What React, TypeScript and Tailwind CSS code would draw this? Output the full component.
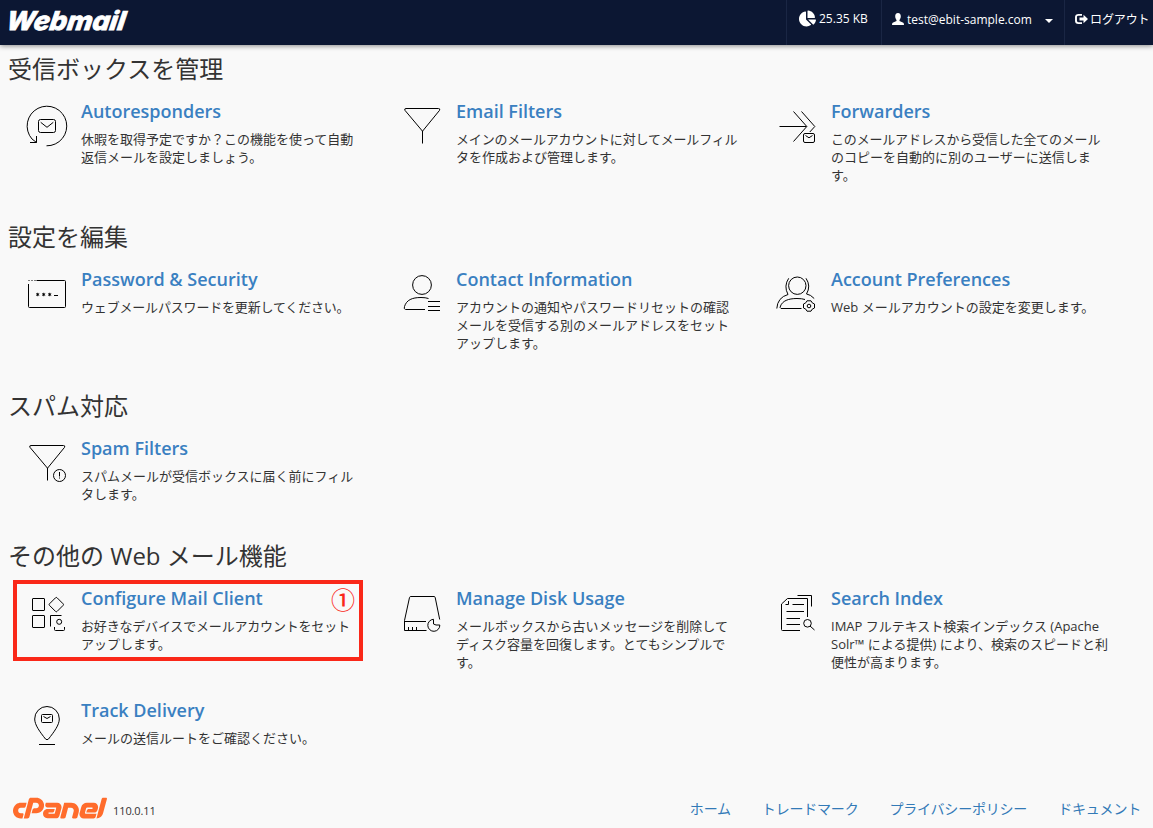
import React from "react";
import { FaChartPie, FaCpanel } from "react-icons/fa";

interface Feature {
  title: string;
  lines: string[];
  icon: React.ReactNode;
  marked?: boolean;
  tight?: boolean;
}

interface Section {
  heading: string;
  features: Feature[];
}

const funnel = (
  <path d="M8 6.5h32.5q2 0 1 1.9L24.5 29.2 7 8.4Q6 6.5 8 6.5M24.5 29v12.5" />
);

const sections: Section[] = [
  {
    heading: "受信ボックスを管理",
    features: [
      {
        title: "Autoresponders",
        lines: [
          "休暇を取得予定ですか？この機能を使って自動",
          "返信メールを設定しましょう。",
        ],
        icon: (
          <>
            <path d="M23.5 43.8A19.8 19.8 0 1 0 9 37l4.5 3.5M7 40.5h6.5v-6.5" />
            <rect x="15.5" y="17.5" width="17" height="13" rx="2" />
            <path d="M17.7 20.3l6.3 5 6.3-5" />
          </>
        ),
      },
      {
        title: "Email Filters",
        lines: [
          "メインのメールアカウントに対してメールフィル",
          "タを作成および管理します。",
        ],
        tight: true,
        icon: funnel,
      },
      {
        title: "Forwarders",
        lines: [
          "このメールアドレスから受信した全てのメール",
          "のコピーを自動的に別のユーザーに送信しま",
          "す。",
        ],
        tight: true,
        icon: (
          <>
            <path d="M6.5 24.5h27M20.5 9.5l13.3 15-13.3 15M28.5 9.5l13.3 15-5 5.5" />
            <rect x="30.5" y="31.5" width="11" height="9" rx="1.5" />
            <path d="M32.5 33.5l3.5 2.3 3.5-2.3" />
          </>
        ),
      },
    ],
  },
  {
    heading: "設定を編集",
    features: [
      {
        title: "Password & Security",
        lines: ["ウェブメールパスワードを更新してください。"],
        tight: true,
        icon: (
          <>
            <path d="M13.5 10.5h28q1 0 1 1v25q0 1-1 1h-35q-1 0-1-1V14" />
            <path d="M5 10.5h8" strokeDasharray="2 1" strokeWidth="0.5" />
            <path
              d="M14.700 22.800v3.400M13.200 23.600l3 1.800M16.200 23.600l-3 1.800M20.700 22.800v3.400M19.200 23.600l3 1.800M22.200 23.600l-3 1.800M26.700 22.800v3.400M25.200 23.600l3 1.800M28.200 23.600l-3 1.800"
            />
            <path d="M31 25.5h4" />
          </>
        ),
      },
      {
        title: "Contact Information",
        lines: [
          "アカウントの通知やパスワードリセットの確認",
          "メールを受信する別のメールアドレスをセット",
          "アップします。",
        ],
        icon: (
          <>
            <circle cx="24" cy="15" r="9.4" />
            <path d="M27 39.5H7.5Q5.5 39 6.5 36.5C8.5 30 14 27.5 23 27.5q4.5 0 7.5 1" />
            <path d="M30 31.5h12M30 36.5h12M30 40.5h12" />
          </>
        ),
      },
      {
        title: "Account Preferences",
        lines: ["Web メールアカウントの設定を変更します。"],
        icon: (
          <>
            <circle cx="24.3" cy="15.7" r="8.7" />
            <path d="M15.7 8.3Q10.5 16 15 24.5 4.5 27.5 3.8 38.5M33 8.3q5.2 7.7.5 15.7 4 .5 7.7 4.5" />
            <path d="M28.5 38.5H8q-1.5-.5-.5-2.5C9.5 31 15 28.5 24 28.5q5 0 8 1" />
            <path d="M34 30.8h4l1.2 2 2.3 1.2v4l-2.3 1.2-1.2 2h-4l-1.2-2-2.3-1.2v-4l2.3-1.2z" />
            <circle cx="36" cy="36" r="1.8" />
          </>
        ),
      },
    ],
  },
  {
    heading: "スパム対応",
    features: [
      {
        title: "Spam Filters",
        lines: [
          "スパムメールが受信ボックスに届く前にフィル",
          "タします。",
        ],
        icon: (
          <>
            {funnel}
            <circle cx="36.5" cy="36.5" r="6" />
            <path d="M36.5 33v4.5M36.5 38.5v1" />
          </>
        ),
      },
    ],
  },
  {
    heading: "その他の Web メール機能",
    features: [
      {
        title: "Configure Mail Client",
        lines: [
          "お好きなデバイスでメールアカウントをセット",
          "アップします。",
        ],
        marked: true,
        tight: true,
        icon: (
          <>
            <rect x="9.5" y="9.5" width="12" height="12" rx="0.5" />
            <rect x="9.5" y="26.5" width="12" height="12" rx="0.5" />
            <path d="M32.5 8.8q.8-.8 1.6 0l6 6q.8.8 0 1.6l-6 6q-.8.8-1.6 0l-6-6q-.8-.8 0-1.6z" />
            <path d="M27.5 37.5v-11h11M31.5 38v2.5q0 1 1 1h8q1 0 1-1V38" />
            <circle cx="36.2" cy="32.8" r="2.5" />
          </>
        ),
      },
      {
        title: "Manage Disk Usage",
        lines: [
          "メールボックスから古いメッセージを削除して",
          "ディスク容量を回復します。とてもシンプルで",
          "す。",
        ],
        icon: (
          <>
            <path d="M28.5 41.5h-22v-10L11.5 8.5q.3-1 1.3-1h23.2q1 0 1.2 1l4.5 22M6.5 32.5H28" />
            <path d="M10.5 38v3M14.5 38v3M18.5 38v3" />
            <path d="M35.5 30.3a6 6 0 1 0 6.3 5.7h-3.8L35.5 35z" />
          </>
        ),
      },
      {
        title: "Search Index",
        lines: [
          "IMAP フルテキスト検索インデックス (Apache",
          "Solr™ による提供) により、検索のスピードと利",
          "便性が高まります。",
        ],
        icon: (
          <>
            <path d="M27 41.5H9.5q-1 0-1-1V15L14.5 9.5h20V28M24.5 6.5h14v11M12.5 15.5h3v-3.5" />
            <path d="M19.5 15.5H31M13.5 22.5H31M13.5 29.5H27M13.5 35.5H27" />
            <circle cx="34.5" cy="34.3" r="3.8" />
            <path d="M37 37l4.5 4" />
          </>
        ),
      },
      {
        title: "Track Delivery",
        lines: ["メールの送信ルートをご確認ください。"],
        icon: (
          <>
            <path d="M24 5.5A12.3 12.3 0 0 0 11.7 18c0 6 5.3 13 10.8 20q1.5 1.5 3 0C31 31 36.3 24 36.3 18A12.3 12.3 0 0 0 24 5.5zM16 43.5h16" />
            <rect x="18.5" y="13.5" width="11" height="8" rx="1" />
            <path d="M20.5 15.5l3.5 2 3.5-2" />
          </>
        ),
      },
    ],
  },
];

const footerLinks = [
  "ホーム",
  "トレードマーク",
  "プライバシーポリシー",
  "ドキュメント",
];

const Header: React.FC = () => {
  return (
    <header className="flex h-[45px] justify-between bg-[#0c1733] text-xs text-white shadow-[0_1px_5px_rgba(0,0,0,0.45)]">
      <svg width="140" height="40" viewBox="0 0 140 40" role="img" aria-label="Webmail">
        <text
          x="8"
          y="30.5"
          textLength="119"
          lengthAdjust="spacingAndGlyphs"
          transform="translate(2 0) skewX(-9)"
          fill="white"
          stroke="white"
          strokeWidth="0.8"
          className="font-['Inter',sans-serif] text-[26px] font-extrabold italic"
        >
          Webmail
        </text>
      </svg>
      <div className="flex">
        <div className="flex w-[95px] items-start gap-[3px] border-l border-[#1a2644] pt-[10px] pl-[12px]">
          <FaChartPie className="h-[17px] w-[17px]" />
          <span className="leading-[18px]">25.35 KB</span>
        </div>
        <div className="flex w-[183px] items-start border-l border-[#1a2644] pt-[10px] pl-[10px]">
          <svg
            className="mt-[3px] mr-[3px]"
            width="12"
            height="12"
            viewBox="0 0 12 12"
            fill="currentColor"
          >
            <path d="M6 0C4 0 3.2 1.5 3.2 3.3c0 1.7.6 2.7 1.3 3.7v1L.7 9.8Q0 10.3 0 12h12q0-1.7-.7-2.2L7.5 8V7c.7-1 1.3-2 1.3-3.7C8.8 1.5 8 0 6 0z" />
          </svg>
          <span className="leading-[20px]">test@ebit-sample.com</span>
          <svg
            className="mt-[9px] ml-[13px]"
            width="8"
            height="4"
            viewBox="0 0 8 4"
            fill="currentColor"
          >
            <path d="M0 0h8L4 4z" />
          </svg>
        </div>
        <div className="flex w-[89px] items-start border-l border-[#1a2644] pt-[10px] pl-[10px]">
          <svg className="mt-[3px] mr-[2px] shrink-0" width="13" height="12" viewBox="0 0 13 12">
            <path
              d="M7 1.9H3.5Q1 1.9 1 4v4q0 2.1 2.5 2.1H7"
              fill="none"
              stroke="currentColor"
              strokeWidth="1.9"
            />
            <path d="M4.5 4.5H8.5V1.8L13 6l-4.5 4.2V7.5h-4z" fill="currentColor" />
          </svg>
          <span className="leading-[20px] tracking-[-0.1px] whitespace-nowrap">ログアウト</span>
        </div>
      </div>
    </header>
  );
};

const FeatureItem: React.FC<{ feature: Feature }> = ({ feature }) => {
  return (
    <li className="relative mb-[30px] flex gap-[10px]">
      <svg
        className="shrink-0"
        width="48"
        height="48"
        viewBox="0 0 48 48"
        fill="none"
        stroke="black"
        strokeWidth="1"
      >
        {feature.icon}
      </svg>
      <div className="-mt-px whitespace-nowrap">
        <a href="#" className="block text-lg leading-5 font-semibold text-[#3a80c1]">
          {feature.title}
        </a>
        <p
          className={`mt-[9px] text-[13px] leading-[18px] text-[#333] ${
            feature.tight ? "first-line:tracking-[-0.18px]" : ""
          }`}
        >
          {feature.lines.map((line) => (
            <React.Fragment key={line}>
              {line}
              <br />
            </React.Fragment>
          ))}
        </p>
      </div>
      {feature.marked && (
        <div className="absolute -top-[9px] -left-[10px] flex h-[81px] w-[350px] justify-end border-4 border-[#fa2819] pt-px pr-1 text-2xl leading-7 text-[#fa2819]">
          <span className="font-['Noto_Sans_CJK_JP',sans-serif] font-medium">①</span>
        </div>
      )}
    </li>
  );
};

const App: React.FC = () => {
  return (
    <div
      lang="ja"
      className="flex h-[828px] w-[1153px] flex-col overflow-hidden bg-[#f9f9f9] font-['Open_Sans','Noto_Sans_CJK_JP',sans-serif] text-[#333]"
    >
      <Header />
      <main className="flex-1 pt-[11px]">
        {sections.map((section) => (
          <section key={section.heading} className="mb-[10.3px]">
            <h2 className="mb-5 ml-2 text-2xl leading-[26px]">{section.heading}</h2>
            <ul className="ml-[23px] grid grid-cols-[375px_375px_375px]">
              {section.features.map((feature) => (
                <FeatureItem key={feature.title} feature={feature} />
              ))}
            </ul>
          </section>
        ))}
      </main>
      <footer className="flex h-[38px] items-center justify-between pr-3 pl-[13px]">
        <div className="flex items-center gap-[6px]">
          <FaCpanel className="-mt-px h-[76px] w-[94px] text-[#ff6c2c]" />
          <span className="mt-1 text-[11px] tracking-[-0.1px]">110.0.11</span>
        </div>
        <nav className="flex gap-[31px] text-sm tracking-[-0.2px] text-[#337ab7]">
          {footerLinks.map((link) => (
            <a key={link} href="#">
              {link}
            </a>
          ))}
        </nav>
      </footer>
    </div>
  );
};

export default App;
